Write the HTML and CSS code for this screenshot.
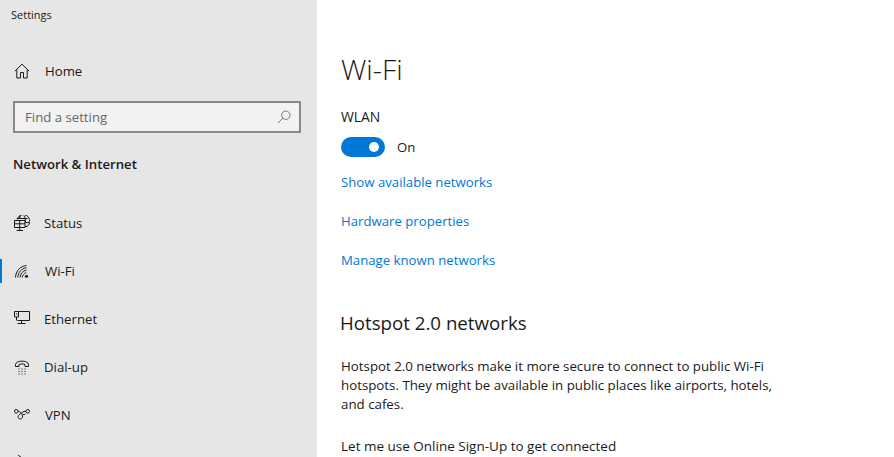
FILE: index.html
```html
<!DOCTYPE html>
<html lang="en">
<head>
<meta charset="utf-8">
<title>Settings</title>
<link rel="stylesheet" href="styles.css">
</head>
<body>
<div class="app">
  <aside class="sidebar">
    <div class="titlebar">Settings</div>
    <div class="nav-row home inset">
      <svg class="icon" viewBox="0 0 16 16"><path d="M.8 8.200 8 1.200l7.200 7M2.800 6.500V15h3.700V9.500h3V15h3.700V6.500"/></svg>
      <span>Home</span>
    </div>
    <div class="search">
      <span>Find a setting</span>
      <svg class="search-icon" viewBox="0 0 14 14"><circle cx="8.800" cy="5.200" r="4.200"/><path d="M5.800 8.200 1 13"/></svg>
    </div>
    <div class="section">Network &amp; Internet</div>
    <nav class="nav">
      <div class="nav-row">
        <svg class="icon" viewBox="0 0 16 16"><path d="M3 4.500A6.500 6.500 0 1 1 13 11.500H11M3 3.500h10.500M5.500 4V1.500M10 .8c1.200 2 1.700 4.500 1.300 7M6.500.8C6 1.500 5.700 2.500 5.500 3.500M11.500 7.500h3.700"/><path d="M.5 5.500h10.500v7H.5zM.5 8.800h10.500M5.700 5.500v7M5.700 12.500v2.800M2.500 15.500h6.500"/></svg>
        <span>Status</span>
      </div>
      <div class="nav-row active inset">
        <svg class="icon" viewBox="0 0 16 16"><path d="M1.500 14.500C1.800 8 6 3.300 12.500 2.500M3.800 14.500C4 9.500 7.500 5.500 12.500 4.700M6 14.500C6.200 11 8.500 8 12.500 7M8.200 14.500c.2-2 1.500-4 4-5"/><circle class="dot" cx="12.500" cy="13.300" r="1.600"/></svg>
        <span>Wi-Fi</span>
      </div>
      <div class="nav-row">
        <svg class="icon" viewBox="0 0 16 16"><path d="M4.500 .5H15.500V9.500H3.500M7.500 9.500v3M3.500 12.500h8"/><path d="M.5 .5h4v5.500h-4zM1.800 3h1.500M2.500 6v3.500"/></svg>
        <span>Ethernet</span>
      </div>
      <div class="nav-row">
        <svg class="icon" viewBox="0 0 16 16"><path d="M1.500 7.500V5.500c0-4.500 13-4.500 13 0v2h-3.500V5.500c-1.500-.8-4.500-.8-6 0v2z"/><path d="M4.500 10h1M7.500 10h1M10.500 10h1M4.500 12.500h1M7.500 12.500h1M10.500 12.500h1M4.500 15h1M7.500 15h1M10.500 15h1"/></svg>
        <span>Dial-up</span>
      </div>
      <div class="nav-row inset">
        <svg class="icon" viewBox="0 0 16 16"><circle cx="2.300" cy="4.300" r="1.800"/><circle cx="13.700" cy="4.300" r="1.800"/><path d="M4.100 4.300c2 0 3 1.800 3.900 3.200 1.100 1.800.7 4.500-1.700 4.500-2.500 0-2.800-3-1-4.300C7 6.500 9 4 11.900 4.300M8.500 7c.8 1 2.300 1 3-.3"/></svg>
        <span>VPN</span>
      </div>
      <div class="nav-row">
        <svg class="icon" viewBox="0 0 16 16"><path d="M4 0l4 3v12"/></svg>
      </div>
    </nav>
  </aside>
  <main class="content">
    <h1>Wi-Fi</h1>
    <div class="label">WLAN</div>
    <div class="toggle-row">
      <span class="toggle"></span>
      <span>On</span>
    </div>
    <a class="link">Show available networks</a>
    <a class="link">Hardware properties</a>
    <a class="link">Manage known networks</a>
    <h2>Hotspot 2.0 networks</h2>
    <p class="body">Hotspot 2.0 networks make it more secure to connect to public Wi-Fi hotspots. They might be available in public places like airports, hotels, and cafes.</p>
    <p class="signup">Let me use Online Sign-Up to get connected</p>
  </main>
</div>
</body>
</html>
```
FILE: styles.css
```css
* { box-sizing: border-box; }
html, body { margin: 0; height: 100%; overflow: hidden; }
body { font-family: "Open Sans", "Noto Sans", sans-serif; font-size: 13.2px; color: #1a1a1a; background: #fff; }
.app { display: flex; height: 457px; overflow: hidden; }
.sidebar { width: 317px; flex: none; background: #e6e6e6; }
.titlebar { height: 30px; padding: 7px 0 0 11px; font-size: 11px; line-height: 16px; }
.nav-row { display: flex; align-items: center; height: 48px; padding-left: 14px; gap: 14px; position: relative; line-height: 20px; flex: none; }
.inset { gap: 15px; }
.home { height: 45px; margin-top: 18px; }
.icon { width: 16px; height: 16px; flex: none; fill: none; stroke: #1a1a1a; stroke-width: 1; }
.icon .dot { fill: #1a1a1a; stroke: none; }
.search { width: 288px; height: 32px; margin: 8px 0 0 13px; border: 2px solid #8a8a8a; background: #f2f2f2; display: flex; align-items: center; justify-content: space-between; padding: 0 8px 0 10px; color: #666; }
.search-icon { width: 14px; height: 14px; fill: none; stroke: #777; stroke-width: 1; }
.section { margin: 21px 0 0 13px; font-weight: 600; line-height: 20px; height: 20px; }
.nav { margin-top: 25px; }
.active::before { content: ""; position: absolute; left: 0; top: 12px; width: 2px; height: 24px; background: #0078d7; }
.content { flex: 1; padding: 0 0 0 24px; min-width: 0; }
h1 { margin: 49px 0 0; font-size: 28.4px; font-weight: 300; line-height: 40px; height: 40px; }
.label { margin-top: 18px; font-size: 13.9px; line-height: 20px; height: 20px; }
.toggle-row { display: flex; align-items: center; gap: 12px; margin-top: 9px; height: 22px; }
.toggle { display: block; width: 44px; height: 20px; border-radius: 10px; background: #0078d7; position: relative; }
.toggle::after { content: ""; position: absolute; right: 6px; top: 5px; width: 10px; height: 10px; border-radius: 50%; background: #fff; }
.link { display: block; color: #0078d7; line-height: 20px; height: 20px; margin-bottom: 19px; }
.toggle-row + .link { margin-top: 14px; }
h2 { margin: 40px 0 0 -1px; font-size: 18.7px; font-weight: 400; line-height: 26px; height: 26px; }
.body { margin: 21px 0 0; width: 440px; font-size: 13.3px; line-height: 19px; }
.signup { margin: 23px 0 0; font-size: 13.5px; line-height: 19px; }
```
